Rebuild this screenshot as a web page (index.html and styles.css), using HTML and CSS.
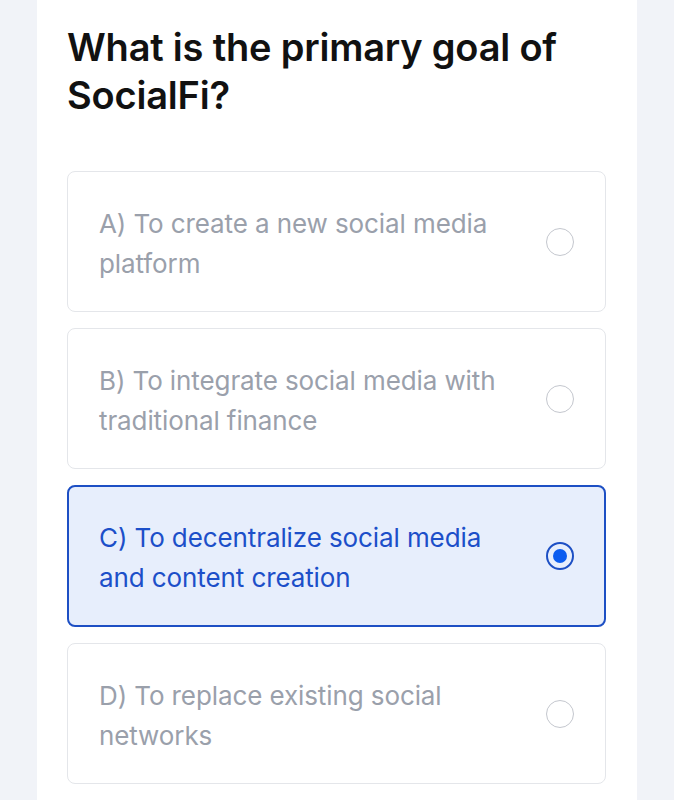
FILE: index.html
```html
<!DOCTYPE html>
<html lang="en">
<head>
<meta charset="utf-8">
<title>Quiz</title>
<link rel="stylesheet" href="styles.css">
</head>
<body>
<main class="panel">
  <h1 class="question">What is the primary goal of SocialFi?</h1>
  <ul class="options">
    <li class="option">
      <span class="option-text">A) To create a new social media platform</span>
      <span class="radio"></span>
    </li>
    <li class="option">
      <span class="option-text">B) To integrate social media with traditional finance</span>
      <span class="radio"></span>
    </li>
    <li class="option selected">
      <span class="option-text">C) To decentralize social media and content creation</span>
      <span class="radio"><span class="dot"></span></span>
    </li>
    <li class="option">
      <span class="option-text">D) To replace existing social networks</span>
      <span class="radio"></span>
    </li>
  </ul>
</main>
</body>
</html>
```

FILE: styles.css
```css
* { box-sizing: border-box; }
html, body { margin: 0; padding: 0; }
body {
  background: #f1f3f8;
  font-family: "Inter", "Lato", sans-serif;
  min-height: 800px;
}
.panel {
  width: 600px;
  margin-left: 37px;
  background: #ffffff;
  min-height: 800px;
  padding: 23px 31px 0 30px;
}
.question {
  margin: 0;
  font-size: 38px;
  line-height: 48px;
  font-weight: 600;
  color: #111111;
  letter-spacing: -0.2px;
  width: 520px;
}
.options {
  list-style: none;
  margin: 52px 0 0 0;
  padding: 0;
  display: flex;
  flex-direction: column;
  gap: 16px;
}
.option {
  display: flex;
  align-items: center;
  justify-content: space-between;
  height: 141px;
  padding: 0 31px 0 31px;
  border: 1px solid #e4e6ea;
  border-radius: 8px;
  background: #ffffff;
}
.option-text {
  width: 410px;
  font-size: 26px;
  line-height: 40px;
  padding-top: 4px;
  color: #9aa0ab;
  font-weight: 400;
  letter-spacing: -0.1px;
}
.radio {
  width: 28px;
  height: 28px;
  border-radius: 50%;
  border: 1.5px solid #c4c7ce;
  display: flex;
  align-items: center;
  justify-content: center;
  flex: none;
}
.option.selected {
  height: 142px;
  background: #e7eefc;
  border: 2px solid #1d4fc4;
  padding: 0 30px;
}
.option.selected .option-text {
  color: #1c4fc9;
}
.option.selected .radio {
  border: 2px solid #1d4fc4;
}
.dot {
  width: 14px;
  height: 14px;
  border-radius: 50%;
  background: #0b5cf0;
}
```
